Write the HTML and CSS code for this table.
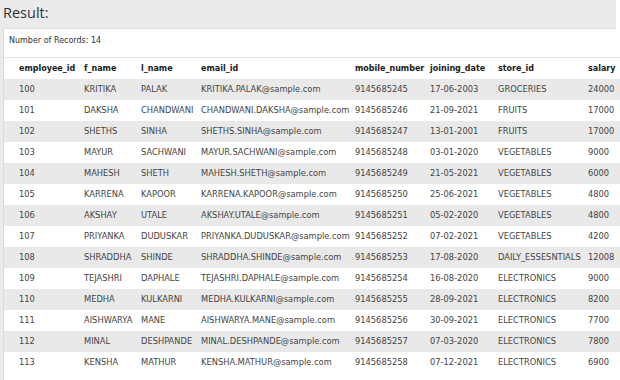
FILE: index.html
```html
<!DOCTYPE html>
<html lang="en">
<head>
  <meta charset="UTF-8">
  <title>Result</title>
  <link rel="stylesheet" href="styles.css">
</head>
<body>
  <div class="result">
    <h2 class="result-title">Result:</h2>
    <div class="result-panel">
      <p class="record-count">Number of Records: 14</p>
      <table class="records">
        <colgroup>
          <col class="c-id"><col class="c-fname"><col class="c-lname"><col class="c-email">
          <col class="c-mobile"><col class="c-date"><col class="c-store"><col class="c-salary">
        </colgroup>
        <thead>
          <tr>
            <th>employee_id</th><th>f_name</th><th>l_name</th><th>email_id</th>
            <th>mobile_number</th><th>joining_date</th><th>store_id</th><th>salary</th>
          </tr>
        </thead>
        <tbody>
          <tr><td>100</td><td>KRITIKA</td><td>PALAK</td><td>KRITIKA.PALAK@sample.com</td><td>9145685245</td><td>17-06-2003</td><td>GROCERIES</td><td>24000</td></tr>
          <tr><td>101</td><td>DAKSHA</td><td>CHANDWANI</td><td>CHANDWANI.DAKSHA@sample.com</td><td>9145685246</td><td>21-09-2021</td><td>FRUITS</td><td>17000</td></tr>
          <tr><td>102</td><td>SHETHS</td><td>SINHA</td><td>SHETHS.SINHA@sample.com</td><td>9145685247</td><td>13-01-2001</td><td>FRUITS</td><td>17000</td></tr>
          <tr><td>103</td><td>MAYUR</td><td>SACHWANI</td><td>MAYUR.SACHWANI@sample.com</td><td>9145685248</td><td>03-01-2020</td><td>VEGETABLES</td><td>9000</td></tr>
          <tr><td>104</td><td>MAHESH</td><td>SHETH</td><td>MAHESH.SHETH@sample.com</td><td>9145685249</td><td>21-05-2021</td><td>VEGETABLES</td><td>6000</td></tr>
          <tr><td>105</td><td>KARRENA</td><td>KAPOOR</td><td>KARRENA.KAPOOR@sample.com</td><td>9145685250</td><td>25-06-2021</td><td>VEGETABLES</td><td>4800</td></tr>
          <tr><td>106</td><td>AKSHAY</td><td>UTALE</td><td>AKSHAY.UTALE@sample.com</td><td>9145685251</td><td>05-02-2020</td><td>VEGETABLES</td><td>4800</td></tr>
          <tr><td>107</td><td>PRIYANKA</td><td>DUDUSKAR</td><td>PRIYANKA.DUDUSKAR@sample.com</td><td>9145685252</td><td>07-02-2021</td><td>VEGETABLES</td><td>4200</td></tr>
          <tr><td>108</td><td>SHRADDHA</td><td>SHINDE</td><td>SHRADDHA.SHINDE@sample.com</td><td>9145685253</td><td>17-08-2020</td><td>DAILY_ESSESNTIALS</td><td>12008</td></tr>
          <tr><td>109</td><td>TEJASHRI</td><td>DAPHALE</td><td>TEJASHRI.DAPHALE@sample.com</td><td>9145685254</td><td>16-08-2020</td><td>ELECTRONICS</td><td>9000</td></tr>
          <tr><td>110</td><td>MEDHA</td><td>KULKARNI</td><td>MEDHA.KULKARNI@sample.com</td><td>9145685255</td><td>28-09-2021</td><td>ELECTRONICS</td><td>8200</td></tr>
          <tr><td>111</td><td>AISHWARYA</td><td>MANE</td><td>AISHWARYA.MANE@sample.com</td><td>9145685256</td><td>30-09-2021</td><td>ELECTRONICS</td><td>7700</td></tr>
          <tr><td>112</td><td>MINAL</td><td>DESHPANDE</td><td>MINAL.DESHPANDE@sample.com</td><td>9145685257</td><td>07-03-2020</td><td>ELECTRONICS</td><td>7800</td></tr>
          <tr><td>113</td><td>KENSHA</td><td>MATHUR</td><td>KENSHA.MATHUR@sample.com</td><td>9145685258</td><td>07-12-2021</td><td>ELECTRONICS</td><td>6900</td></tr>
        </tbody>
      </table>
    </div>
  </div>
</body>
</html>
```

FILE: styles.css
```css
* {
  box-sizing: border-box;
}

body {
  margin: 0;
  background: #ffffff;
  font-family: 'DejaVu Sans', Verdana, sans-serif;
  overflow: hidden;
}

.result {
  width: 616px;
  background: #ebebeb;
  padding: 0 0 0 3px;
}

.result-title {
  margin: 0;
  height: 28px;
  padding-top: 3px;
  font-family: 'Open Sans', 'Noto Sans', sans-serif;
  font-size: 14.5px;
  font-weight: normal;
  line-height: 20px;
  color: #333333;
}

.result-panel {
  background: #ffffff;
  border-left: 1px solid #dadada;
  border-top: 1px solid #e2e2e2;
  padding-top: 6px;
  height: 352px;
}

.record-count {
  margin: 0 0 10px 5px;
  font-size: 8px;
  line-height: 12px;
  color: #333333;
}

.records {
  border-collapse: collapse;
  table-layout: fixed;
  width: 638px;
  border-top: 1px solid #e3e3e3;
}

.c-id { width: 74px; }
.c-fname { width: 57px; }
.c-lname { width: 60px; }
.c-email { width: 154px; }
.c-mobile { width: 75px; }
.c-date { width: 68px; }
.c-store { width: 90px; }
.c-salary { width: 60px; }

.records th,
.records td {
  text-align: left;
  padding: 0 0 0 6px;
  white-space: nowrap;
}

.records th:first-child,
.records td:first-child {
  padding-left: 15px;
}

.records th {
  height: 21px;
  font-size: 8px;
  font-weight: bold;
  color: #1a1a1a;
}

.records td {
  height: 21px;
  font-size: 8.3px;
  color: #444444;
}

.records tbody tr:nth-child(odd) {
  background: #e9e9e9;
}
```
